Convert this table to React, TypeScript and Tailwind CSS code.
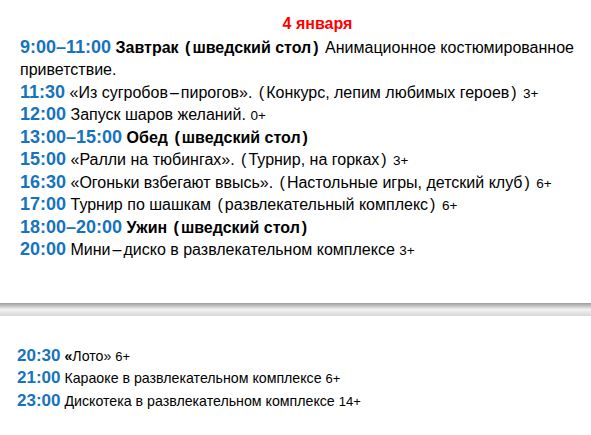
import React from "react";

type Item = {
    time: string;
    text: string;
    bold?: boolean;
    age?: string;
    note?: string;
};

const dayItems: Item[] = [
    { time: "9:00–11:00", text: "Завтрак (шведский стол)", bold: true, note: "Анимационное костюмированное приветствие." },
    { time: "11:30", text: "«Из сугробов–пирогов». (Конкурс, лепим любимых героев)", age: "3+" },
    { time: "12:00", text: "Запуск шаров желаний.", age: "0+" },
    { time: "13:00–15:00", text: "Обед (шведский стол)", bold: true },
    { time: "15:00", text: "«Ралли на тюбингах». (Турнир, на горках)", age: "3+" },
    { time: "16:30", text: "«Огоньки взбегают ввысь». (Настольные игры, детский клуб)", age: "6+" },
    { time: "17:00", text: "Турнир по шашкам (развлекательный комплекс)", age: "6+" },
    { time: "18:00–20:00", text: "Ужин (шведский стол)", bold: true },
    { time: "20:00", text: "Мини–диско в развлекательном комплексе", age: "3+" },
];

const eveningItems: Item[] = [
    { time: "20:30", text: "«Лото»", age: "6+" },
    { time: "21:00", text: "Караоке в развлекательном комплексе", age: "6+" },
    { time: "23:00", text: "Дискотека в развлекательном комплексе", age: "14+" },
];

// parens and dashes sit a little apart from the words in the original
const Spaced = ({ text, spaced }: { text: string; spaced: boolean }) => {
    if (!spaced) return <>{text}</>;
    return (
        <>
            {text.split(/([()–])/).map((part, i) =>
                /^[()–]$/.test(part) ? (
                    <span key={i} className="px-[2px]">
                        {part}
                    </span>
                ) : (
                    <React.Fragment key={i}>{part}</React.Fragment>
                )
            )}
        </>
    );
};

const Row = ({
    item,
    timeSize,
    ageSize,
    spaced,
}: {
    item: Item;
    timeSize: string;
    ageSize: string;
    spaced: boolean;
}) => (
    <div>
        <span className={`${timeSize} leading-none font-bold text-[#1673be]`}>{item.time}</span>{" "}
        <span className={item.bold ? "font-bold" : ""}>
            {!spaced && item.text.startsWith("«Лото") ? (
                <>
                    <span className="font-bold">«</span>
                    {item.text.slice(1)}
                </>
            ) : (
                <Spaced text={item.text} spaced={spaced} />
            )}
        </span>
        {item.note && <> {item.note}</>}
        {item.age && (
            <>
                {" "}
                <span className={`${ageSize} leading-none`}>{item.age}</span>
            </>
        )}
    </div>
);

export default function App() {
    return (
        <div className="w-[591px] h-[435px] overflow-hidden bg-white text-black font-['Liberation_Sans',Arial,sans-serif]">
            <div className="h-[303px] flex flex-col">
                <h1 className="mt-[14px] pl-[44px] text-center text-[16px] leading-[20px] font-bold text-[#ff0000]">
                    4 января
                </h1>
                <div className="mt-[2.5px] pl-[20px] text-[16px] leading-[22.5px]">
                    {dayItems.map((item) => (
                        <Row key={item.time} item={item} timeSize="text-[18px]" ageSize="text-[13.5px]" spaced />
                    ))}
                </div>
            </div>

            <div className="h-[13px] bg-gradient-to-b from-[#9c9c9c] via-[#f3f3f3] to-[#d6d6d6]" />

            <div className="pt-[28.5px] pl-[17px] text-[14.2px] leading-[22.85px]">
                {eveningItems.map((item) => (
                    <Row
                        key={item.time}
                        item={item}
                        timeSize="text-[17px]"
                        ageSize="text-[13px]"
                        spaced={false}
                    />
                ))}
            </div>
        </div>
    );
}
